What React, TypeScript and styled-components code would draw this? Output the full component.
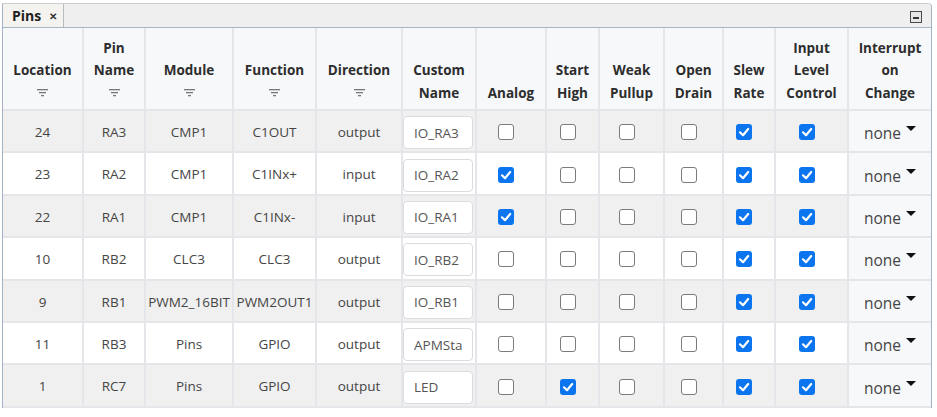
import React from "react";
import styled, { createGlobalStyle } from "styled-components";

const GlobalStyle = createGlobalStyle`
  html, body { margin: 0; padding: 0; background: #ffffff; }
  body { font-family: "Open Sans", "Noto Sans", Arial, sans-serif; }
  * { box-sizing: border-box; }
`;

const Panel = styled.div`
  margin: 3px 0 0 2px;
  width: 930px;
  border-left: 1px solid #a3b3c3;
  border-right: 1px solid #a3b3c3;
  border-top: 1px solid #c9cdd2;
  border-top-right-radius: 4px;
  background: #ffffff;
`;

const TabBar = styled.div`
  height: 24px;
  background: #efefef;
  border-bottom: 1px solid #a7b6c5;
  display: flex;
  align-items: stretch;
  justify-content: space-between;
  border-top-right-radius: 4px;
`;

const Tab = styled.div`
  width: 61px;
  background: #f5f3ef;
  border-right: 1px solid #b8bcc1;
  display: flex;
  align-items: center;
  padding-left: 9px;
  gap: 8px;
  font-weight: 700;
  font-size: 14px;
  color: #1f1f1f;
`;

const CloseMark = styled.span`
  font-size: 10px;
  font-weight: 700;
  color: #333;
  line-height: 1;
  margin-top: 1px;
`;

const MinButton = styled.div`
  width: 12px;
  height: 12px;
  margin: 7px 9px 0 0;
  border: 1px solid #4a4a4a;
  background: #e6e6e6;
  display: flex;
  align-items: flex-end;
  justify-content: center;
  padding-bottom: 3px;
  &::after {
    content: "";
    width: 6px;
    height: 2px;
    background: #333;
  }
`;

const Grid = styled.div`
  display: grid;
  grid-template-columns: 79px 60px 86px 81px 84px 72px 68px 51px 63px 57px 50px 71px 82px;
  grid-template-rows: 81px;
  grid-auto-rows: 40.4px;
  gap: 2px;
  background: #e4e6e9;
  padding-bottom: 2px;
`;

const HeadCell = styled.div`
  background: #f7f8fa;
  display: flex;
  flex-direction: column;
  justify-content: flex-end;
  align-items: center;
  text-align: center;
  font-weight: 700;
  font-size: 13.5px;
  line-height: 22.5px;
  color: #2d2d2d;
  padding-bottom: 5px;
`;

const HeadLine = styled.div`
  white-space: nowrap;
`;

const FilterBox = styled.div`
  height: 22.5px;
  display: flex;
  align-items: center;
  justify-content: center;
`;

const Cell = styled.div<{ $odd: boolean; $fixed?: boolean }>`
  background: ${(p) => (p.$fixed ? "#f7f8fa" : p.$odd ? "#f0f0f0" : "#ffffff")};
  display: flex;
  align-items: center;
  justify-content: center;
  min-width: 0;
  overflow: hidden;
`;

const TextCell = styled.div<{ $odd: boolean }>`
  background: ${(p) => (p.$odd ? "#f0f0f0" : "#ffffff")};
  font-size: 13.5px;
  color: #454545;
  line-height: 42px;
  text-align: center;
  white-space: nowrap;
  overflow: hidden;
  min-width: 0;
`;

const CheckCell = styled(Cell)`
  padding-right: 10px;
  padding-top: 2px;
`;

const InputCell = styled(Cell)`
  justify-content: flex-start;
  padding: 3px 2px 0 0;
`;

const NameInput = styled.input`
  width: 70px;
  height: 33px;
  border: 1px solid #dadcdf;
  border-radius: 4px;
  background: #ffffff;
  padding: 0 10px;
  font-family: "Open Sans", "Noto Sans", Arial, sans-serif;
  font-size: 13.5px;
  color: #555555;
  outline: none;
`;

const Box = styled.span<{ $checked: boolean }>`
  width: 16px;
  height: 16px;
  border-radius: 3px;
  border: ${(p) => (p.$checked ? "none" : "1.5px solid #7b7b7b")};
  background: ${(p) => (p.$checked ? "#0b74ef" : "#ffffff")};
  display: inline-flex;
  align-items: center;
  justify-content: center;
`;

const Select = styled.div`
  display: flex;
  align-items: flex-start;
  gap: 5px;
  font-size: 15.5px;
  color: #454545;
  line-height: 22px;
  margin-top: 4px;
`;

const Caret = styled.svg`
  margin-top: 4px;
`;

const FilterIcon = () => (
  <svg width="11" height="8" viewBox="0 0 11 8">
    <rect x="0" y="0" width="11" height="1.3" fill="#777" />
    <rect x="2" y="3" width="7" height="1.3" fill="#777" />
    <rect x="4" y="6" width="3" height="1.3" fill="#777" />
  </svg>
);

const CheckBox = ({ checked }: { checked: boolean }) => (
  <Box $checked={checked}>
    {checked && (
      <svg width="16" height="16" viewBox="0 0 16 16">
        <polyline
          points="4,8.3 7,11.2 12.2,5"
          fill="none"
          stroke="#ffffff"
          strokeWidth="2.2"
          strokeLinecap="round"
          strokeLinejoin="round"
        />
      </svg>
    )}
  </Box>
);

type Head = { lines: string[]; filter?: boolean };

const heads: Head[] = [
  { lines: ["Location"], filter: true },
  { lines: ["Pin", "Name"], filter: true },
  { lines: ["Module"], filter: true },
  { lines: ["Function"], filter: true },
  { lines: ["Direction"], filter: true },
  { lines: ["Custom", "Name"] },
  { lines: ["Analog"] },
  { lines: ["Start", "High"] },
  { lines: ["Weak", "Pullup"] },
  { lines: ["Open", "Drain"] },
  { lines: ["Slew", "Rate"] },
  { lines: ["Input", "Level", "Control"] },
  { lines: ["Interrupt", "on", "Change"] },
];

type Row = {
  loc: string;
  pin: string;
  mod: string;
  fn: string;
  dir: string;
  name: string;
  checks: boolean[];
};

const rows: Row[] = [
  { loc: "24", pin: "RA3", mod: "CMP1", fn: "C1OUT", dir: "output", name: "IO_RA3", checks: [false, false, false, false, true, true] },
  { loc: "23", pin: "RA2", mod: "CMP1", fn: "C1INx+", dir: "input", name: "IO_RA2", checks: [true, false, false, false, true, true] },
  { loc: "22", pin: "RA1", mod: "CMP1", fn: "C1INx-", dir: "input", name: "IO_RA1", checks: [true, false, false, false, true, true] },
  { loc: "10", pin: "RB2", mod: "CLC3", fn: "CLC3", dir: "output", name: "IO_RB2", checks: [false, false, false, false, true, true] },
  { loc: "9", pin: "RB1", mod: "PWM2_16BIT", fn: "PWM2OUT1", dir: "output", name: "IO_RB1", checks: [false, false, false, false, true, true] },
  { loc: "11", pin: "RB3", mod: "Pins", fn: "GPIO", dir: "output", name: "APMStatus", checks: [false, false, false, false, true, true] },
  { loc: "1", pin: "RC7", mod: "Pins", fn: "GPIO", dir: "output", name: "LED", checks: [false, true, false, false, true, true] },
];

export default function App() {
  return (
    <>
      <GlobalStyle />
      <Panel>
        <TabBar>
          <Tab>
            <span>Pins</span>
            <CloseMark>✕</CloseMark>
          </Tab>
          <MinButton />
        </TabBar>
        <Grid>
          {heads.map((h, i) => (
            <HeadCell key={"h" + i}>
              {h.lines.map((l) => (
                <HeadLine key={l}>{l}</HeadLine>
              ))}
              {h.filter && (
                <FilterBox>
                  <FilterIcon />
                </FilterBox>
              )}
            </HeadCell>
          ))}
          {rows.map((r, ri) => {
            const odd = ri % 2 === 0;
            return (
              <React.Fragment key={"r" + ri}>
                <TextCell $odd={odd}>{r.loc}</TextCell>
                <TextCell $odd={odd}>{r.pin}</TextCell>
                <TextCell $odd={odd}>{r.mod}</TextCell>
                <TextCell $odd={odd}>{r.fn}</TextCell>
                <TextCell $odd={odd}>{r.dir}</TextCell>
                <InputCell $odd={odd}>
                  <NameInput readOnly defaultValue={r.name} />
                </InputCell>
                {r.checks.map((c, ci) => (
                  <CheckCell key={ci} $odd={odd}>
                    <CheckBox checked={c} />
                  </CheckCell>
                ))}
                <Cell $odd={odd} $fixed>
                  <Select>
                    <span>none</span>
                    <Caret width="10" height="5" viewBox="0 0 10 5">
                      <polygon points="0,0 10,0 5,5" fill="#111" />
                    </Caret>
                  </Select>
                </Cell>
              </React.Fragment>
            );
          })}
        </Grid>
      </Panel>
    </>
  );
}
